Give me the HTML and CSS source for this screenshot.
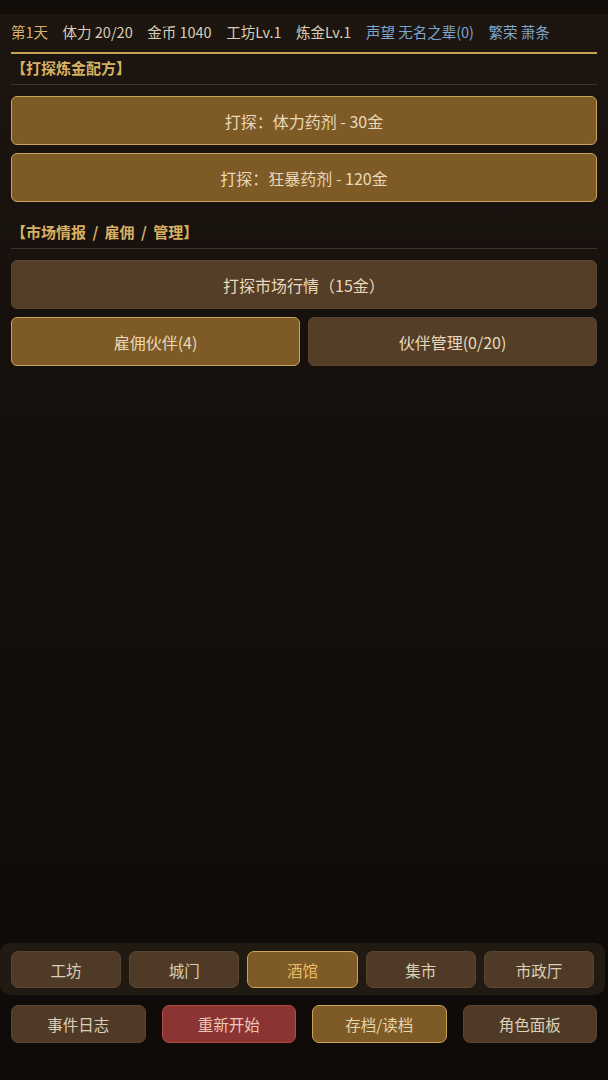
FILE: index.html
```html
<!DOCTYPE html>
<html lang="zh-CN">
<head>
<meta charset="utf-8">
<title>炼金工坊</title>
<link rel="stylesheet" href="styles.css">
</head>
<body>
<div class="app">
  <header class="top">
    <div class="status">
      <span class="day">第1天</span>
      <span>体力 20/20</span>
      <span>金币 1040</span>
      <span>工坊Lv.1</span>
      <span>炼金Lv.1</span>
      <span class="blue">声望 无名之辈(0)</span>
      <span class="blue">繁荣 萧条</span>
    </div>
    <div class="goldline"></div>
  </header>

  <main class="content">
    <section class="section first">
      <h2 class="sec-title">【打探炼金配方】</h2>
      <div class="stack">
        <button class="btn gold">打探：体力药剂 - 30金</button>
        <button class="btn gold">打探：狂暴药剂 - 120金</button>
      </div>
    </section>

    <section class="section">
      <h2 class="sec-title">【市场情报 / 雇佣 / 管理】</h2>
      <div class="stack">
        <button class="btn brown">打探市场行情（15金）</button>
        <div class="pair">
          <button class="btn gold">雇佣伙伴(4)</button>
          <button class="btn brown">伙伴管理(0/20)</button>
        </div>
      </div>
    </section>
  </main>

  <footer class="footer">
    <nav class="navbar">
      <button class="nav">工坊</button>
      <button class="nav">城门</button>
      <button class="nav active">酒馆</button>
      <button class="nav">集市</button>
      <button class="nav">市政厅</button>
    </nav>
    <div class="actions">
      <button class="act">事件日志</button>
      <button class="act red">重新开始</button>
      <button class="act goldact">存档/读档</button>
      <button class="act">角色面板</button>
    </div>
  </footer>
</div>
</body>
</html>
```

FILE: styles.css
```css
* { box-sizing: border-box; }

html, body {
  margin: 0;
  padding: 0;
}

body {
  background: #120d09;
  font-family: "Noto Sans CJK SC", "Noto Sans", sans-serif;
  color: #ddd1ba;
}

.app {
  width: 608px;
  height: 1080px;
  display: flex;
  flex-direction: column;
  padding-top: 14px;
  background: linear-gradient(#130e0a 0, #130e0a 14px, #1c1510 14px, #17110d 300px, #130e0a 650px, #0e0a07 1080px);
}

.top {
  padding: 8px 11px 0;
}

.status {
  display: flex;
  gap: 14.5px;
  font-size: 14.5px;
  line-height: 20px;
  color: #d8cdb8;
  white-space: nowrap;
}

.day { color: #d6b26a; }
.blue { color: #7ea5cc; }

.goldline {
  height: 2px;
  margin-top: 10px;
  background: #c9a052;
}

.content {
  flex: 1;
  padding: 0 11px;
}

.section { margin-top: 20px; }
.section.first { margin-top: 4px; }

.sec-title {
  margin: 0;
  font-size: 15px;
  line-height: 20px;
  font-weight: 700;
  color: #d8b062;
  padding-bottom: 6px;
  border-bottom: 1px solid #3e3329;
  white-space: pre;
  word-spacing: 3px;
}

.stack {
  margin-top: 11px;
  display: flex;
  flex-direction: column;
  gap: 8px;
}

.pair {
  display: grid;
  grid-template-columns: 1fr 1fr;
  gap: 8px;
}

.btn {
  height: 49px;
  border-radius: 6px;
  font-family: inherit;
  font-size: 16px;
  color: #e8d9bb;
  cursor: pointer;
}

.btn.gold {
  background: #7e5a26;
  border: 1px solid #c8a35b;
}

.btn.brown {
  background: #543e28;
  border: 1px solid #5a4430;
}

.footer {
  display: flex;
  flex-direction: column;
  padding-bottom: 37px;
}

.navbar {
  display: grid;
  grid-template-columns: repeat(5, 1fr);
  gap: 8px;
  padding: 8px 11px 7px;
  background: #211a13;
  border-radius: 10px;
  margin: 0 3px 0 0;
}

.nav {
  height: 37px;
  border-radius: 7px;
  background: #4e3a26;
  border: 1px solid #5b4530;
  font-family: inherit;
  font-size: 15.5px;
  color: #dccfb6;
}

.nav.active {
  background: #7e5a26;
  border-color: #c8a35b;
  color: #e6be66;
}

.actions {
  margin-top: 10px;
  padding: 0 11px;
  display: grid;
  grid-template-columns: repeat(4, 1fr);
  gap: 16px;
}

.act {
  height: 38px;
  border-radius: 7px;
  background: #4e3a26;
  border: 1px solid #5b4530;
  font-family: inherit;
  font-size: 15.5px;
  color: #dccfb6;
}

.act.red {
  background: #8a3434;
  border-color: #b24c46;
  color: #f0c6b6;
}

.act.goldact {
  background: #7e5a26;
  border-color: #c8a35b;
  color: #e8d6ae;
}
```
